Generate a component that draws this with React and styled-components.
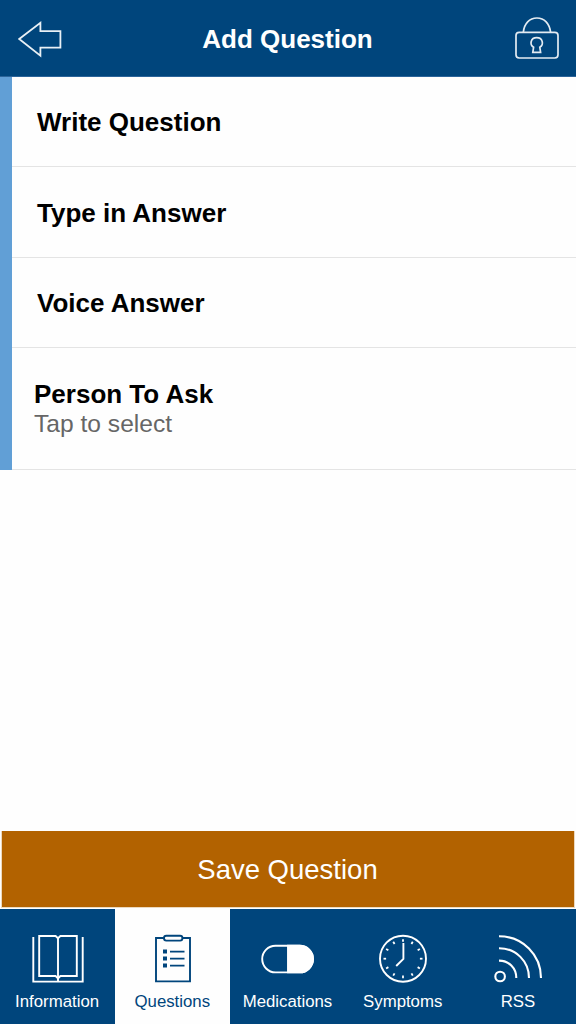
import * as React from "react"
import styled, { createGlobalStyle } from "styled-components"

const BackIcon = () => (
  <svg width="46" height="38" viewBox="0 0 46 38" fill="none" stroke="#e9f0f5" strokeWidth="1.8">
    <path d="M2.2 19L23.4 2.8V11.2H43.4V27.6H23.4V35.6Z" />
  </svg>
)

const LockIcon = () => (
  <svg width="46" height="46" viewBox="0 2 46 46" fill="none" stroke="#e3ebf2" strokeWidth="1.7">
    <rect x="2" y="18.3" width="42" height="25.7" rx="3.2" />
    <path d="M9.3 18.3C10.2 9.5 15.5 4 22.9 4S35.6 9.5 36.6 18.3" />
    <path d="M19.6 33.2C15.2 30.6 16.6 23.7 22.7 23.7S30.2 30.6 25.8 33.2L26.6 38.4H18.8Z" />
  </svg>
)

const BookIcon = () => (
  <svg width="56" height="56" viewBox="0 0 56 56" fill="none" stroke="#fff" strokeWidth="1.9">
    <path d="M3.3 7V51.6H52.7V7" />
    <path d="M28 8.2L25.6 6H9.2V46H25.6L28 48.4L30.4 46H46.8V6H30.4Z" />
    <path d="M28 8V51" />
  </svg>
)

const ClipboardIcon = () => (
  <svg width="56" height="56" viewBox="0 0 56 56" fill="none" stroke="#00457c" strokeWidth="1.9">
    <path d="M19 8H11V51.4H45V8H37" />
    <rect x="19" y="5.7" width="18.4" height="4.9" rx="2.3" />
    <path d="M18 21.6H22M18 28.6H22M18 35.6H22" strokeWidth="4" />
    <path d="M25 21.6H39.5M25 28.6H39.5M25 35.6H39.5" />
  </svg>
)

const PillIcon = () => (
  <svg width="56" height="56" viewBox="0 0 56 56" fill="none" stroke="#fff" strokeWidth="1.9">
    <rect x="2.2" y="15.8" width="50.8" height="26.6" rx="13.3" />
    <path d="M28 15.8H39.7A13.3 13.3 0 0 1 39.7 42.4H28Z" fill="#fff" />
  </svg>
)

const ticks = [0, 30, 60, 90, 120, 150, 180, 210, 240, 270, 300, 330]

const ClockIcon = () => (
  <svg width="56" height="56" viewBox="0 0 56 56" fill="none" stroke="#fff" strokeWidth="1.9">
    <circle cx="28" cy="28.7" r="23" />
    {ticks.map(angle => (
      <path key={angle} d="M28 9.2V11.8" strokeWidth="1.8" transform={`rotate(${angle} 28 28.7)`} />
    ))}
    <path d="M28.4 13V28.8L21.2 36" />
  </svg>
)

const RssIcon = () => (
  <svg width="56" height="56" viewBox="0 0 56 56" fill="none" stroke="#fff" strokeWidth="2.1">
    <circle cx="10.1" cy="46.5" r="4.8" />
    <path d="M9 30.6C18.8 30.6 26.3 38 26.3 48" />
    <path d="M9 18.2C26 18.2 39 31.4 39 48" />
    <path d="M9 6.3C32.8 6.3 51 24.8 51 48" />
  </svg>
)

const tabs = [
  { label: "Information", icon: <BookIcon /> },
  { label: "Questions", icon: <ClipboardIcon />, active: true },
  { label: "Medications", icon: <PillIcon /> },
  { label: "Symptoms", icon: <ClockIcon /> },
  { label: "RSS", icon: <RssIcon /> },
]

const App = () => (
  <Screen>
    <GlobalStyle />
    <Header>
      <HeaderButton aria-label="Back">
        <BackIcon />
      </HeaderButton>
      <Title>Add Question</Title>
      <HeaderButton aria-label="Lock">
        <LockIcon />
      </HeaderButton>
    </Header>
    <List>
      <Row>
        <RowTitle>Write Question</RowTitle>
      </Row>
      <Row>
        <RowTitle>Type in Answer</RowTitle>
      </Row>
      <Row>
        <RowTitle>Voice Answer</RowTitle>
      </Row>
      <Row $tall>
        <RowTitle>Person To Ask</RowTitle>
        <RowHint>Tap to select</RowHint>
      </Row>
    </List>
    <SaveButton>Save Question</SaveButton>
    <TabBar>
      {tabs.map(tab => (
        <Tab key={tab.label} $active={tab.active}>
          {tab.icon}
          <TabLabel>{tab.label}</TabLabel>
        </Tab>
      ))}
    </TabBar>
  </Screen>
)

export default App

const GlobalStyle = createGlobalStyle`
  * {
    box-sizing: border-box;
  }

  body {
    margin: 0;
    background: #fefefe;
    font-family: "Liberation Sans", Arial, sans-serif;
  }

  button {
    border: 0;
    padding: 0;
    font-family: inherit;
  }

  svg {
    display: block;
    flex-shrink: 0;
  }
`

const Screen = styled.div`
  display: flex;
  flex-direction: column;
  width: 576px;
  height: 1024px;
`

const Header = styled.header`
  display: flex;
  align-items: center;
  justify-content: space-between;
  height: 77px;
  padding: 1px 16px 0 17px;
  background: #00457c;
  border-bottom: 1px solid #2b649a;
`

const HeaderButton = styled.button`
  background: none;
`

const Title = styled.h1`
  margin: 0 2px 0 0;
  font-size: 26px;
  line-height: 30px;
  font-weight: 700;
  color: white;
`

const List = styled.main`
  border-left: 12px solid #619fd6;
`

const Row = styled.div`
  height: ${props => (props.$tall ? "121.4px" : "90.6px")};
  padding: ${props => (props.$tall ? "31px 0 0 22px" : "30px 0 0 25px")};
  border-bottom: 1px solid #e4e4e4;

  &:first-child {
    height: 90px;
  }

  &:nth-child(2) {
    padding-top: 31px;
  }
`

const RowTitle = styled.div`
  font-size: 26px;
  line-height: 30px;
  font-weight: 700;
  color: black;
`

const RowHint = styled.div`
  font-size: 24.6px;
  line-height: 30px;
  color: #666;
`

const SaveButton = styled.button`
  height: 77px;
  margin: auto 1px 1px;
  padding: 2px 1px 0 0;
  background: #b26200;
  border: 1px solid #ecd9bf;
  border-top: 0;
  font-size: 27.5px;
  line-height: 32px;
  color: white;
`

const TabBar = styled.nav`
  display: grid;
  grid-template-columns: repeat(5, 1fr);
  height: 115px;
`

const Tab = styled.button`
  display: flex;
  flex-direction: column;
  align-items: center;
  padding-top: 21px;
  background: ${props => (props.$active ? "#fefefe" : "#00457c")};
  color: ${props => (props.$active ? "#00457c" : "white")};
`

const TabLabel = styled.span`
  margin: 6px 1px 0 0;
  font-size: 16.8px;
  line-height: 20px;
`
